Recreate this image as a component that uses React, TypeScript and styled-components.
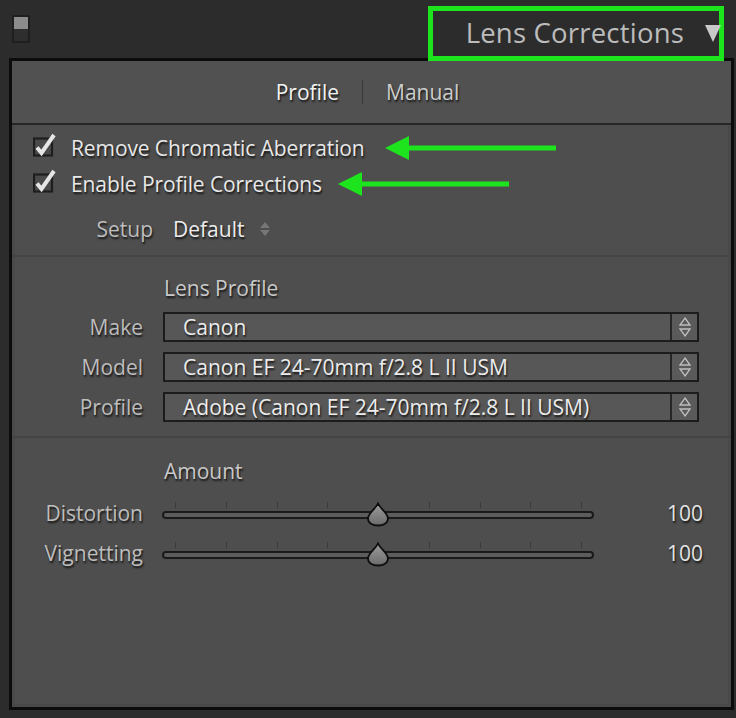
import React from "react";
import styled, { createGlobalStyle } from "styled-components";

const GlobalStyle = createGlobalStyle`
  html, body {
    margin: 0;
    padding: 0;
    background: #2c2c2c;
  }
  body {
    font-family: "Open Sans", "Liberation Sans", sans-serif;
  }
`;

const GREEN = "#1ee41e";

const Page = styled.div`
  width: 736px;
  height: 718px;
  box-sizing: border-box;
  padding: 0 2px 8px 9px;
  display: flex;
  flex-direction: column;
  background: #2c2c2c;
`;

const TopBar = styled.div`
  height: 58px;
  flex: none;
  display: flex;
  justify-content: space-between;
  align-items: flex-start;
`;

const Toggle = styled.div`
  margin: 15px 0 0 3px;
  width: 18px;
  height: 28px;
  box-sizing: border-box;
  border: 2px solid #1f1f1f;
  display: flex;
  flex-direction: column;

  span {
    flex: 1;
    background: #2e2e2e;
  }
  span:first-child {
    background: #8c8c8c;
  }
`;

const TitleBox = styled.div`
  position: relative;
  z-index: 2;
  margin: 6px 10px 0 0;
  width: 296px;
  height: 55px;
  box-sizing: border-box;
  border: 5px solid ${GREEN};
  background: #2c2c2c;
  display: flex;
  align-items: center;
  justify-content: flex-end;
`;

const Title = styled.span`
  font-size: 27.5px;
  color: #bcbcbc;
  letter-spacing: 0.2px;
  margin-top: -2px;
`;

const Caret = styled.span`
  margin-left: 21px;
  width: 0;
  height: 0;
  border-left: 8px solid transparent;
  border-right: 8px solid transparent;
  border-top: 17px solid #c9c9c9;
  margin-right: -2px;
`;

const Panel = styled.div`
  flex: 1;
  display: flex;
  flex-direction: column;
  border: 3px solid #0c0c0c;
  background: #4e4e4e;
  box-shadow: inset 0 0 0 3px #494949;
  color: #e6e6e6;
  font-size: 21px;
  text-shadow: 1px 2px 2px rgba(0, 0, 0, 0.75);
`;

const Tabs = styled.div`
  height: 62px;
  flex: none;
  display: flex;
  align-items: center;
  justify-content: center;
  gap: 23px;
  padding-right: 8px;
  background: #515151;
  border-bottom: 2px solid #262626;
`;

const Tab = styled.span<{ $active?: boolean }>`
  color: ${(p) => (p.$active ? "#f2f2f2" : "#cdcdcd")};
`;

const TabDivider = styled.span`
  width: 1px;
  height: 24px;
  background: #3a3a3a;
`;

const Section = styled.div<{ $grow?: boolean }>`
  display: flex;
  flex-direction: column;
  flex: ${(p) => (p.$grow ? 1 : "none")};
  border-bottom: ${(p) => (p.$grow ? "none" : "2px solid #444444")};
`;

const CheckSection = styled(Section)`
  padding: 5px 0 8px 21px;
`;

const CheckRow = styled.label<{ $arrowGap: number }>`
  height: 36px;
  display: flex;
  align-items: center;
  color: #e8e8e8;
  letter-spacing: -0.1px;

  svg.check {
    margin-right: 14px;
    margin-top: -6px;
  }
  svg.arrow {
    margin-left: ${(p) => p.$arrowGap}px;
  }
`;

const SetupRow = styled.div`
  margin-top: 9px;
  height: 36px;
  display: flex;
  align-items: center;
`;

const Label = styled.span<{ $w: number }>`
  width: ${(p) => p.$w}px;
  flex: none;
  text-align: right;
  color: #bdbdbd;
  margin-right: 20px;
`;

const Value = styled.span`
  color: #ececec;
`;

const Heading = styled.div<{ $top: number }>`
  margin: ${(p) => p.$top}px 0 0 152px;
  height: 30px;
  line-height: 30px;
  color: #c9c9c9;
`;

const ProfileSection = styled(Section)`
  padding-bottom: 14px;
`;

const SelectList = styled.div`
  margin-top: 9px;
  display: flex;
  flex-direction: column;
  gap: 10px;
  padding-right: 32px;
`;

const SelectRow = styled.div`
  display: flex;
  align-items: center;
  height: 30px;
`;

const SelectBox = styled.div`
  flex: 1;
  height: 30px;
  box-sizing: border-box;
  border: 2px solid #1c1c1c;
  background: #575757;
  display: flex;
  align-items: stretch;
`;

const SelectText = styled.span`
  flex: 1;
  padding-left: 18px;
  line-height: 26px;
  color: #ececec;
  white-space: nowrap;
`;

const SelectStepper = styled.span`
  width: 25px;
  border-left: 2px solid #262626;
  background: #5a5a5a;
  display: flex;
  align-items: center;
  justify-content: center;
`;

const AmountGap = styled.div`
  height: 7px;
`;

const SliderRow = styled.div`
  height: 40px;
  display: flex;
  align-items: center;
  padding-right: 28px;
`;

const SliderLabel = styled(Label)`
  margin-right: 19px;
  margin-top: -1px;
`;

const Slider = styled.div`
  position: relative;
  width: 432px;
  height: 40px;
  flex: none;
  display: flex;
  flex-direction: column;
  padding-top: 9px;
  box-sizing: border-box;
`;

const Ticks = styled.div`
  height: 6px;
  display: flex;
  justify-content: space-between;
  padding: 0 12px 0 13px;

  i {
    width: 1px;
    background: #3a3a3a;
  }
`;

const Track = styled.div`
  margin-top: 3px;
  height: 8px;
  box-sizing: border-box;
  border: 2px solid #1a1a1a;
  border-radius: 5px;
  background: #5c5c5c;
`;

const Thumb = styled.svg`
  position: absolute;
  top: 9px;
  left: 204px;
`;

const Number = styled.span`
  flex: 1;
  text-align: right;
  color: #e4e4e4;
  margin-top: -1px;
`;

const CheckIcon = () => (
  <svg className="check" width="24" height="24" viewBox="0 0 24 24">
    <rect x="1" y="5.5" width="18" height="17" fill="#4a4a4a" stroke="#1e1e1e" strokeWidth="2.2" />
    <polyline
      points="4,14.5 8.5,20 21,2"
      fill="none"
      stroke="#e6e6e6"
      strokeWidth="4"
      strokeLinejoin="miter"
    />
  </svg>
);

const GreenArrow = () => (
  <svg className="arrow" width="171" height="26" viewBox="0 0 171 26">
    <polygon points="0,13 24,1 24,25" fill={GREEN} />
    <rect x="20" y="10.5" width="151" height="5" fill={GREEN} />
  </svg>
);

const SmallStepper = () => (
  <svg width="12" height="18" viewBox="0 0 12 18" style={{ marginLeft: 15 }}>
    <polygon points="6,2 11,8 1,8" fill="#767676" />
    <polygon points="6,16 11,10 1,10" fill="#767676" />
  </svg>
);

const OutlineStepper = () => (
  <svg width="12" height="22" viewBox="0 0 12 22">
    <polygon points="6,2 11,9 1,9" fill="none" stroke="#bdbdbd" strokeWidth="1.3" />
    <polygon points="6,20 11,13 1,13" fill="none" stroke="#bdbdbd" strokeWidth="1.3" />
  </svg>
);

const ThumbIcon = () => (
  <Thumb width="24" height="25" viewBox="0 0 24 25">
    <defs>
      <linearGradient id="thumbFill" x1="0" y1="0" x2="0" y2="1">
        <stop offset="0" stopColor="#9d9d9d" />
        <stop offset="1" stopColor="#6b6b6b" />
      </linearGradient>
    </defs>
    <path
      d="M12 1.5 C14.5 7 22 11 22 16.5 C22 21 17.5 23.5 12 23.5 C6.5 23.5 2 21 2 16.5 C2 11 9.5 7 12 1.5 Z"
      fill="url(#thumbFill)"
      stroke="#0e0e0e"
      strokeWidth="1.8"
    />
  </Thumb>
);

const selects = [
  { label: "Make", value: "Canon" },
  { label: "Model", value: "Canon EF 24-70mm f/2.8 L II USM" },
  { label: "Profile", value: "Adobe (Canon EF 24-70mm f/2.8 L II USM)" },
];

const sliders = [
  { label: "Distortion", value: 100 },
  { label: "Vignetting", value: 100 },
];

export default function App() {
  return (
    <>
      <GlobalStyle />
      <Page>
        <TopBar>
          <Toggle>
            <span />
            <span />
          </Toggle>
          <TitleBox>
            <Title>Lens Corrections</Title>
            <Caret />
          </TitleBox>
        </TopBar>

        <Panel>
          <Tabs>
            <Tab $active>Profile</Tab>
            <TabDivider />
            <Tab>Manual</Tab>
          </Tabs>

          <CheckSection>
            <CheckRow $arrowGap={20}>
              <CheckIcon />
              Remove Chromatic Aberration
              <GreenArrow />
            </CheckRow>
            <CheckRow $arrowGap={16}>
              <CheckIcon />
              Enable Profile Corrections
              <GreenArrow />
            </CheckRow>
            <SetupRow>
              <Label $w={120}>Setup</Label>
              <Value>Default</Value>
              <SmallStepper />
            </SetupRow>
          </CheckSection>

          <ProfileSection>
            <Heading $top={16}>Lens Profile</Heading>
            <SelectList>
              {selects.map((s) => (
                <SelectRow key={s.label}>
                  <Label $w={131}>{s.label}</Label>
                  <SelectBox>
                    <SelectText>{s.value}</SelectText>
                    <SelectStepper>
                      <OutlineStepper />
                    </SelectStepper>
                  </SelectBox>
                </SelectRow>
              ))}
            </SelectList>
          </ProfileSection>

          <Section $grow>
            <Heading $top={18}>Amount</Heading>
            <AmountGap />
            {sliders.map((s) => (
              <SliderRow key={s.label}>
                <SliderLabel $w={131}>{s.label}</SliderLabel>
                <Slider>
                  <Ticks>
                    {Array.from({ length: 9 }).map((_, i) => (
                      <i key={i} />
                    ))}
                  </Ticks>
                  <Track />
                  <ThumbIcon />
                </Slider>
                <Number>{s.value}</Number>
              </SliderRow>
            ))}
          </Section>
        </Panel>
      </Page>
    </>
  );
}
